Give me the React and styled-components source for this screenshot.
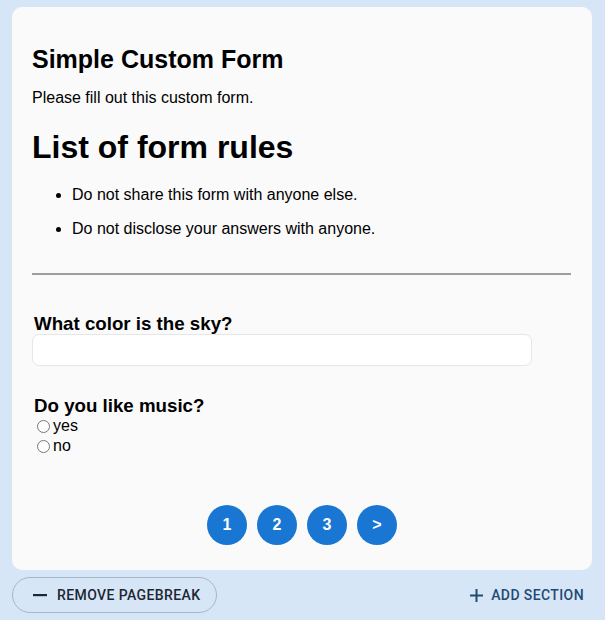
import React from "react";
import styled, { createGlobalStyle } from "styled-components";

const Global = createGlobalStyle`
  html, body { margin: 0; padding: 0; background: #d7e6f6; }
  body { font-family: "Liberation Sans", Arial, sans-serif; color: #000; }
`;

const Page = styled.div`
  padding: 7px 13px 0 12px;
`;

const Card = styled.div`
  background: #fafafa;
  border-radius: 10px;
  padding: 20px 20px 25px 20px;
  display: flex;
  flex-direction: column;
`;

const Title = styled.h2`
  margin: 18px 0 0;
  font-size: 25px;
  line-height: 28px;
  font-weight: 700;
`;

const Intro = styled.p`
  margin: 16px 0 0;
  font-size: 16px;
  line-height: 18px;
`;

const Heading = styled.h1`
  margin: 22px 0 0;
  font-size: 32px;
  line-height: 37px;
  font-weight: 700;
`;

const Rules = styled.ul`
  margin: 20px 0 0;
  padding-left: 40px;
  font-size: 16px;
  line-height: 18px;
  display: flex;
  flex-direction: column;
  gap: 16px;
`;

const Divider = styled.hr`
  margin: 35px 1px 0 0;
  border: none;
  border-top: 2px solid #9e9e9e;
  height: 0;
`;

const QuestionLabel = styled.label`
  display: block;
  margin-top: ${(p) => p.$top}px;
  padding-left: 2px;
  font-size: 18.72px;
  line-height: 20px;
  font-weight: 700;
`;

const TextInput = styled.input`
  box-sizing: border-box;
  width: 500px;
  height: 32px;
  border: 1px solid #e6e6e6;
  border-radius: 7px;
  background: #fff;
  outline: none;
  padding: 0 10px;
  font: 16px "Liberation Sans", Arial, sans-serif;
`;

const RadioRow = styled.label`
  display: flex;
  align-items: center;
  height: 20px;
  font-size: 16px;
`;

const Radio = styled.input`
  width: 13px;
  height: 13px;
  margin: 0 3px 0 5px;
`;

const Pager = styled.div`
  margin-top: 49px;
  display: flex;
  justify-content: center;
  gap: 10px;
`;

const PageDot = styled.button`
  width: 40px;
  height: 40px;
  border-radius: 50%;
  border: none;
  background: #1976d2;
  color: #fff;
  font: 700 16px "Liberation Sans", Arial, sans-serif;
  display: flex;
  align-items: center;
  justify-content: center;
  padding: 0;
`;

const Actions = styled.div`
  margin-top: 7px;
  display: flex;
  justify-content: space-between;
  align-items: center;
`;

const OutlineButton = styled.button`
  box-sizing: border-box;
  height: 36px;
  width: 205px;
  border-radius: 18px;
  border: 1px solid #a7b6c6;
  background: transparent;
  display: flex;
  align-items: center;
  gap: 10px;
  padding: 0 0 0 20px;
  font: 500 14px Roboto, sans-serif;
  letter-spacing: 0.4px;
  text-transform: uppercase;
  color: #1d2733;
`;

const TextButton = styled.button`
  height: 36px;
  border: none;
  background: transparent;
  display: flex;
  align-items: center;
  gap: 8px;
  padding: 0 8px 0 0;
  font: 500 14px Roboto, sans-serif;
  letter-spacing: 0.4px;
  text-transform: uppercase;
  color: #234a75;
`;

const Minus = () => (
  <svg width="14" height="14" viewBox="0 0 14 14">
    <rect x="0" y="6" width="14" height="2.2" fill="#1d2733" />
  </svg>
);

const Plus = () => (
  <svg width="13" height="13" viewBox="0 0 13 13">
    <rect x="0" y="5.5" width="13" height="2" fill="#234a75" />
    <rect x="5.5" y="0" width="2" height="13" fill="#234a75" />
  </svg>
);

export default function App() {
  return (
    <Page>
      <Global />
      <Card>
        <Title>Simple Custom Form</Title>
        <Intro>Please fill out this custom form.</Intro>
        <Heading>List of form rules</Heading>
        <Rules>
          <li>Do not share this form with anyone else.</li>
          <li>Do not disclose your answers with anyone.</li>
        </Rules>
        <Divider />
        <QuestionLabel $top={39} htmlFor="sky">What color is the sky?</QuestionLabel>
        <TextInput id="sky" type="text" />
        <QuestionLabel $top={30}>Do you like music?</QuestionLabel>
        <RadioRow>
          <Radio type="radio" name="music" value="yes" />
          yes
        </RadioRow>
        <RadioRow>
          <Radio type="radio" name="music" value="no" />
          no
        </RadioRow>
        <Pager>
          <PageDot>1</PageDot>
          <PageDot>2</PageDot>
          <PageDot>3</PageDot>
          <PageDot>&gt;</PageDot>
        </Pager>
      </Card>
      <Actions>
        <OutlineButton>
          <Minus />
          Remove Pagebreak
        </OutlineButton>
        <TextButton>
          <Plus />
          Add Section
        </TextButton>
      </Actions>
    </Page>
  );
}
